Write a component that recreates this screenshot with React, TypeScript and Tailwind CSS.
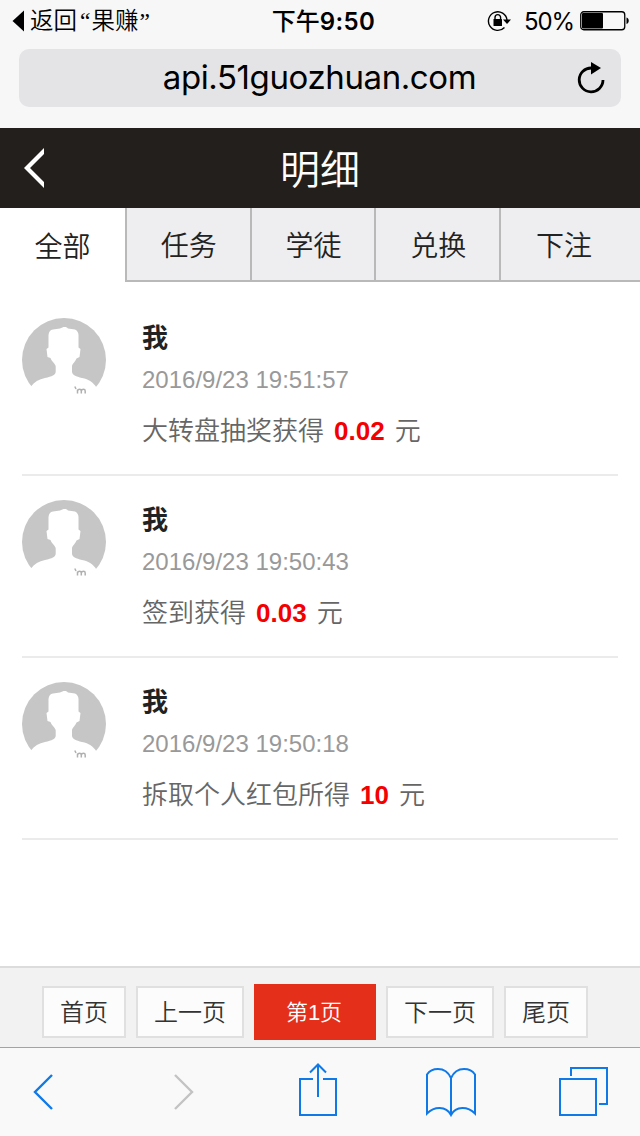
import { useState } from 'react';

const tabs = ['全部', '任务', '学徒', '兑换', '下注'];

const records = [
  { id: 1, name: '我', time: '2016/9/23 19:51:57', text: '大转盘抽奖获得', amount: '0.02' },
  { id: 2, name: '我', time: '2016/9/23 19:50:43', text: '签到获得', amount: '0.03' },
  { id: 3, name: '我', time: '2016/9/23 19:50:18', text: '拆取个人红包所得', amount: '10' },
];

function StatusBar() {
  return (
    <div className="grid h-10 grid-cols-[1fr_auto_1fr] items-center pl-3 pr-[10px] text-[24px] leading-10 text-black">
      <div className="flex items-center">
        <svg width="12" height="22" viewBox="0 0 12 22" className="mr-[6px]">
          <path d="M12 0.5v21L0.5 11z" fill="#000" />
        </svg>
        <span className="pb-px font-['Liberation_Serif','Noto_Sans_CJK_SC',sans-serif] text-[23.5px] font-[350]">
          返回<span className="ml-[3px] mr-px">“</span>果赚<span className="ml-px">”</span>
        </span>
      </div>
      <div className="flex items-center pl-[5px] pt-px font-medium">
        下午<span className="font-semibold tracking-[0.4px]">9:50</span>
      </div>
      <div className="flex items-center justify-end">
        <svg width="24" height="22" viewBox="0 0 24 22" className="mr-[13px]" fill="none">
          <path d="M17.5 17.5A9.3 9.3 0 1 1 20 10" stroke="#000" strokeWidth="1.4" />
          <path d="M16 9.6h8l-4 4.400z" fill="#000" />
          <rect x="6.5" y="9" width="8.5" height="7" rx="0.6" fill="#000" />
          <path d="M8 10V7.4a2.8 2.8 0 0 1 5.6 0V10" stroke="#000" strokeWidth="1.4" />
        </svg>
        <span className="mr-[6px] pt-0.5 tracking-[-1.1px]">50%</span>
        <svg width="50" height="20" viewBox="0 0 50 20" fill="none">
          <rect x="0.75" y="0.75" width="44" height="18" rx="3" stroke="#000" strokeWidth="1.3" />
          <rect x="2" y="2" width="21" height="15.5" rx="1" fill="#000" />
          <path d="M46.5 6.5c3 0.5 3 6 0 6.5z" fill="#000" />
        </svg>
      </div>
    </div>
  );
}

function Avatar() {
  return (
    <svg width="84" height="84" viewBox="0 0 84 84" className="shrink-0">
      <circle cx="42" cy="42" r="42" fill="#c6c6c6" />
      <path
        d="M0 84V72L9 68.500C12 64 17 61.300 23 60C30 58.500 33.700 57 33.700 53.500V48.500C33.700 46 30 44 28.500 40L25.500 39L24.500 31L26.500 29.500V17C27 13.500 28 12 31 11.500L38 10.500C41 9 43.500 8 46 10.500L53 11.500C55.500 12.500 56.500 15 56.500 17V29.500L58.500 31L57.500 39L54.500 40.500C53 44 50 46 50 48.500V53.500C50 57 54 58.500 60 60C67 61.500 71 64 74.500 69.500L84 72V84Z"
        fill="#fff"
      />
      <path d="M55.500 75.500V71.500M55.500 73C56 70.800 59.300 70.800 59.300 73V75.500M59.300 73C59.800 70.800 63.200 70.800 63.200 73V75.500M52.800 68.500L54 71" stroke="#b0b0b0" strokeWidth="1.5" fill="none" />
    </svg>
  );
}

function Toolbar() {
  return (
    <div className="flex h-[89px] items-start border-t border-[#a3a3a5] bg-[#f9f9f9] pl-[33px] pt-[14px]">
      <svg width="22" height="60" viewBox="0 0 22 60" fill="none" className="mr-[119px]">
        <path d="M19 13L2 30L19 47" stroke="#1079e8" strokeWidth="2.4" />
      </svg>
      <svg width="22" height="60" viewBox="0 0 22 60" fill="none" className="mr-[102px]">
        <path d="M1 13L18 30L1 47" stroke="#c3c3c3" strokeWidth="2.4" />
      </svg>
      <svg width="40" height="60" viewBox="0 0 40 60" fill="none" className="mr-[87px]" stroke="#1079e8" strokeWidth="2">
        <path d="M15 17H2V53H38V17H25M20 35V3M12 10.500L20 2.500L28 10.500" />
      </svg>
      <svg width="52" height="60" viewBox="0 0 52 60" fill="none" className="mr-[81px]" stroke="#1079e8" strokeWidth="2">
        <path d="M26 53V16C23 9.500 18 7 13 7C8 7 4 9.500 2 12.500V51.500C9 44.500 21 43.500 26 53C31 43.500 43 44.500 50 51.500V12.500C48 9.500 44 7 39 7C34 7 29 9.500 26 16" />
      </svg>
      <svg width="52" height="60" viewBox="0 0 52 60" fill="none" stroke="#1079e8" strokeWidth="2">
        <path d="M2 17H38V53H2ZM13 14V6H49V42H41" />
      </svg>
    </div>
  );
}

export default function App() {
  const [active, setActive] = useState(0);

  return (
    <div className="flex h-[1136px] w-[640px] flex-col overflow-hidden bg-white font-['Inter','Noto_Sans_CJK_SC',sans-serif]">
      <div className="h-32 bg-[#f7f7f8]">
        <StatusBar />
        <div className="mx-[19px] mt-[9px] grid h-[58px] grid-cols-[1fr_auto_1fr] items-center rounded-[10px] bg-[#e4e4e6] pr-4 text-black">
          <div className="w-4" />
          <span className="pb-px pl-[15px] text-[33px] leading-[57px] tracking-[-0.4px]">api.51guozhuan.com</span>
          <svg width="28" height="32" viewBox="0 0 28 32" fill="none" className="justify-self-end">
            <path d="M14.500 6A11.900 11.900 0 1 0 26 18" stroke="#000" strokeWidth="2.8" />
            <path d="M14 0L24 6L14 12.500z" fill="#000" />
          </svg>
        </div>
      </div>

      <header className="grid h-20 grid-cols-[1fr_auto_1fr] items-center bg-[#231f1c] text-white">
        <svg width="21" height="40" viewBox="0 0 21 40" className="ml-6">
          <path d="M20 0V6L6 20L20 34V40L0 20Z" fill="#fff" />
        </svg>
        <h1 className="pt-1 text-[40px] font-[350] leading-[76px]">明细</h1>
      </header>

      <nav className="flex h-[74px] text-[28px] text-[#222]">
        {tabs.map((tab, i) => (
          <button
            key={tab}
            onClick={() => setActive(i)}
            className={
              i === active
                ? 'w-[125px] bg-white pt-1 font-[350]'
                : 'w-[124.700px] border-b-2 border-l-2 border-[#b9b9b9] bg-[#eeeef0] pl-px pt-[3px] font-[350] last:flex-1 last:pr-[14px]'
            }
          >
            {tab}
          </button>
        ))}
      </nav>

      <main className="flex-1 px-[22px] pt-3 font-['Liberation_Sans','Noto_Sans_CJK_SC',sans-serif]">
        {records.map((r) => (
          <div key={r.id} className="flex h-[182px] gap-9 border-b-2 border-[#ebebeb] pt-6">
            <Avatar />
            <div>
              <div className="h-10 text-[26px] font-bold leading-10 text-[#222]">{r.name}</div>
              <div className="h-11 text-[24px] leading-11 text-[#999]">{r.time}</div>
              <div className="h-14 whitespace-pre pt-px text-[26px] font-[350] leading-14 text-[#666]">
                {r.text}
                <span className="mx-[10px] font-bold text-[#f40000]">{r.amount}</span>
                元
              </div>
            </div>
          </div>
        ))}
      </main>

      <div className="flex h-[81px] items-start gap-[10px] border-t-2 border-[#dcdcdc] bg-[#f2f2f2] pl-[42px] pt-[18px] font-['Liberation_Sans','Noto_Sans_CJK_SC',sans-serif] text-[24px] font-[350] text-[#333]">
        <button className="h-[52px] w-[84px] border-2 border-[#e0e0e0] bg-[#fcfcfc] pt-0.5">首页</button>
        <button className="h-[52px] w-[108px] border-2 border-[#e0e0e0] bg-[#fcfcfc] pt-0.5">上一页</button>
        <button className="-mt-0.5 h-[56px] w-[122px] bg-[#e42f1a] pr-0.5 text-[22px] text-white">第1页</button>
        <button className="h-[52px] w-[108px] border-2 border-[#e0e0e0] bg-[#fcfcfc] pt-0.5">下一页</button>
        <button className="h-[52px] w-[84px] border-2 border-[#e0e0e0] bg-[#fcfcfc] pt-0.5">尾页</button>
      </div>

      <Toolbar />
    </div>
  );
}
